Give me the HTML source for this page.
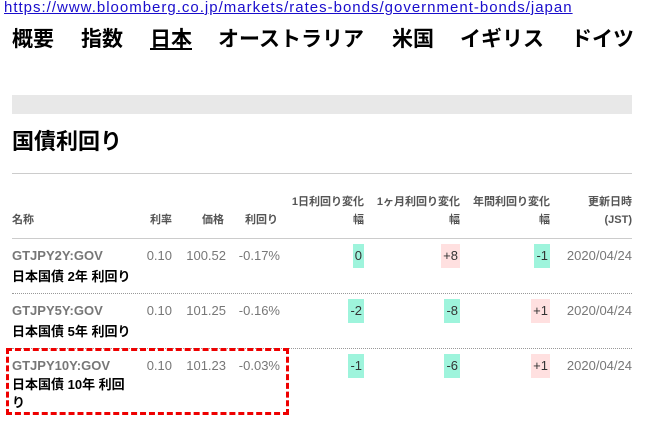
<!DOCTYPE html>
<html><head><meta charset="utf-8"><style>
body{margin:0;width:645px;height:432px;background:#fff;position:relative;overflow:hidden;font-family:"Liberation Sans","Noto Sans CJK JP",sans-serif;}
.a{position:absolute;white-space:nowrap;}
.url{left:4px;top:-1px;font-size:15px;letter-spacing:1px;color:#1a0dcc;text-decoration:underline;}
.nav{top:23px;font-size:21px;font-weight:bold;color:#000;}
.h{font-size:11px;font-weight:bold;color:#555;text-align:right;}
.g{font-size:13px;color:#777;}
.code{font-size:13px;font-weight:bold;color:#777;left:12px;}
.nm{font-size:13px;font-weight:bold;color:#000;left:12px;}
.b{font-size:13px;color:#333;height:24px;line-height:24px;padding:0 2px;text-align:center;}
.gr{background:#9ef4dc;}.pk{background:#ffe0e0;}
</style></head><body>
<div class="a url">https://www.bloomberg.co.jp/markets/rates-bonds/government-bonds/japan</div>
<div class="a nav" style="left:12px">概要</div>
<div class="a nav" style="left:81px">指数</div>
<div class="a nav" style="left:150px;text-decoration:underline">日本</div>
<div class="a nav" style="left:218px">オーストラリア</div>
<div class="a nav" style="left:392px">米国</div>
<div class="a nav" style="left:460px">イギリス</div>
<div class="a nav" style="left:571px">ドイツ</div>
<div class="a" style="left:12px;top:95px;width:620px;height:19px;background-image:radial-gradient(circle,#aaa 0.6px,transparent 0.8px);background-size:2px 2px;"></div>
<div class="a" style="left:12px;top:124px;font-size:22px;font-weight:bold;color:#000">国債利回り</div>
<div class="a" style="left:12px;top:173px;width:620px;height:1px;background:#ccc"></div>
<div class="a h" style="left:12px;top:211px;text-align:left">名称</div>
<div class="a h" style="right:473px;top:211px">利率</div>
<div class="a h" style="right:421px;top:211px">価格</div>
<div class="a h" style="right:367px;top:211px">利回り</div>
<div class="a h" style="right:281px;top:193px;line-height:18px">1日利回り変化<br>幅</div>
<div class="a h" style="right:185px;top:193px;line-height:18px">1ヶ月利回り変化<br>幅</div>
<div class="a h" style="right:95px;top:193px;line-height:18px">年間利回り変化<br>幅</div>
<div class="a h" style="right:13px;top:193px;line-height:18px">更新日時<br>(JST)</div>
<div class="a" style="left:12px;top:238px;width:620px;height:1px;background:#ccc"></div>
<div class="a" style="left:12px;top:293px;width:620px;border-top:1px dotted #999"></div>
<div class="a" style="left:12px;top:348px;width:620px;border-top:1px dotted #999"></div>

<div class="a code" style="top:248px">GTJPY2Y:GOV</div>
<div class="a nm" style="top:266px">日本国債 2年 利回り</div>
<div class="a code" style="top:303px">GTJPY5Y:GOV</div>
<div class="a nm" style="top:321px">日本国債 5年 利回り</div>
<div class="a code" style="top:358px">GTJPY10Y:GOV</div>
<div class="a nm" style="top:376px;line-height:18px">日本国債 10年 利回<br>り</div>

<div class="a g" style="right:473px;top:248px">0.10</div>
<div class="a g" style="right:419px;top:248px">100.52</div>
<div class="a g" style="right:365px;top:248px">-0.17%</div>
<div class="a g" style="right:473px;top:303px">0.10</div>
<div class="a g" style="right:419px;top:303px">101.25</div>
<div class="a g" style="right:365px;top:303px">-0.16%</div>
<div class="a g" style="right:473px;top:358px">0.10</div>
<div class="a g" style="right:419px;top:358px">101.23</div>
<div class="a g" style="right:365px;top:358px">-0.03%</div>

<div class="a b gr" style="right:281px;top:244px">0</div>
<div class="a b pk" style="right:185px;top:244px">+8</div>
<div class="a b gr" style="right:95px;top:244px">-1</div>
<div class="a g" style="right:13px;top:248px">2020/04/24</div>
<div class="a b gr" style="right:281px;top:299px">-2</div>
<div class="a b gr" style="right:185px;top:299px">-8</div>
<div class="a b pk" style="right:95px;top:299px">+1</div>
<div class="a g" style="right:13px;top:303px">2020/04/24</div>
<div class="a b gr" style="right:281px;top:354px">-1</div>
<div class="a b gr" style="right:185px;top:354px">-6</div>
<div class="a b pk" style="right:95px;top:354px">+1</div>
<div class="a g" style="right:13px;top:358px">2020/04/24</div>

<div class="a" style="left:6px;top:348px;width:277px;height:61px;border:3px dashed #e00"></div>
</body></html>
